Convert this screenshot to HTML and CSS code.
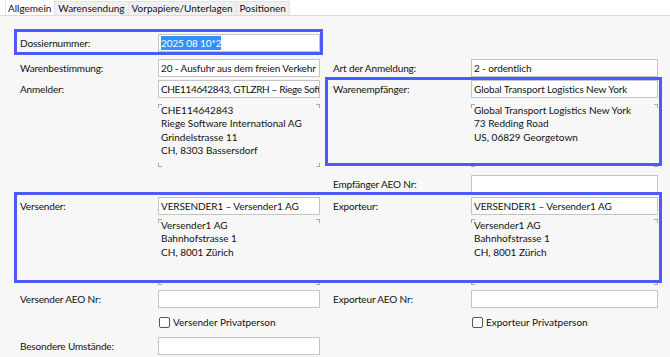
FILE: index.html
```html
<!DOCTYPE html>
<html lang="de">
<head>
<meta charset="utf-8">
<link rel="stylesheet" href="styles.css">
</head>
<body>
<div class="tabs">
  <div class="tab active">Allgemein</div>
  <div class="tab">Warensendung</div>
  <div class="tab">Vorpapiere/Unterlagen</div>
  <div class="tab">Positionen</div>
</div>
<div class="panel">
  <div class="form">
    <div class="lbl cl r1">Dossiernummer:</div>
    <div class="inp ci r1"><span class="sel">2025 08 10*2</span></div>

    <div class="lbl cl r2">Warenbestimmung:</div>
    <div class="inp ci r2">20 - Ausfuhr aus dem freien Verkehr</div>
    <div class="lbl cr r2">Art der Anmeldung:</div>
    <div class="inp cj r2">2 - ordentlich</div>

    <div class="lbl cl r3">Anmelder:</div>
    <div class="inp tight ci r3">CHE114642843, GTLZRH – Riege Soft</div>
    <div class="lbl cr r3">Warenempfänger:</div>
    <div class="inp cj r3">Global Transport Logistics New York</div>

    <div class="addr ci r4">CHE114642843<br>Riege Software International AG<br>Grindelstrasse 11<br>CH, 8303 Bassersdorf</div>
    <div class="addr cj r4">Global Transport Logistics New York<br>73 Redding Road<br>US, 06829 Georgetown</div>

    <div class="lbl cr r5">Empfänger AEO Nr:</div>
    <div class="inp cj r5"></div>

    <div class="lbl cl r6">Versender:</div>
    <div class="inp ci r6">VERSENDER1 – Versender1 AG</div>
    <div class="lbl cr r6">Exporteur:</div>
    <div class="inp cj r6">VERSENDER1 – Versender1 AG</div>

    <div class="addr addr-tall ci r7">Versender1 AG<br>Bahnhofstrasse 1<br>CH, 8001 Zürich</div>
    <div class="addr addr-tall cj r7">Versender1 AG<br>Bahnhofstrasse 1<br>CH, 8001 Zürich</div>

    <div class="lbl cl r8">Versender AEO Nr:</div>
    <div class="inp ci r8"></div>
    <div class="lbl cr r8">Exporteur AEO Nr:</div>
    <div class="inp cj r8"></div>

    <label class="chk ci r9"><span class="box"></span>Versender Privatperson</label>
    <label class="chk cj r9"><span class="box"></span>Exporteur Privatperson</label>

    <div class="lbl cl r10">Besondere Umstände:</div>
    <div class="inp ci r10"></div>

    <div class="hl hl-dossier"></div>
    <div class="hl hl-empf"></div>
    <div class="hl hl-vers"></div>
  </div>
</div>
</body>
</html>
```
FILE: styles.css
```css
html, body {
  margin: 0;
  padding: 0;
  background: #ffffff;
}
body {
  width: 670px;
  height: 357px;
  overflow: hidden;
  font-family: Lato, "Liberation Sans", sans-serif;
  font-size: 10px;
  color: #111111;
}
.tabs {
  display: flex;
  align-items: flex-end;
  height: 15px;
  padding-left: 5px;
  border-bottom: 1px solid #dadada;
  background: #ffffff;
}
.tab {
  height: 13px;
  line-height: 13px;
  padding: 0 3px;
  font-size: 10px;
  background: #f0f0f0;
  border: 1px solid #e3e3e3;
  border-bottom: none;
  border-left: none;
  color: #111111;
}
.tab.active {
  height: 15px;
  line-height: 16px;
  background: #ffffff;
  border-left: 1px solid #e3e3e3;
  padding: 0 3px 0 2px;
}
.panel {
  background: #f7f7f7;
  height: 341px;
}
.form {
  display: grid;
  grid-template-columns: 20px 138px 162px 13px 138px 187px 1fr;
  grid-template-rows: 25px 21px 24px 71px 22px 22px 71px 25px 22px 20px;
  padding-top: 18px;
}
.r1 { grid-row: 1; }
.r2 { grid-row: 2; }
.r3 { grid-row: 3; }
.r4 { grid-row: 4; }
.r5 { grid-row: 5; }
.r6 { grid-row: 6; }
.r7 { grid-row: 7; }
.r8 { grid-row: 8; }
.r9 { grid-row: 9; }
.r10 { grid-row: 10; }
.cl { grid-column: 2; }
.ci { grid-column: 3; }
.cr { grid-column: 5; }
.cj { grid-column: 6; }
.lbl {
  align-self: start;
  line-height: 18px;
  white-space: nowrap;
  letter-spacing: -0.15px;
}
.inp {
  align-self: start;
  box-sizing: border-box;
  height: 18px;
  line-height: 16px;
  padding: 0 2px;
  background: #ffffff;
  border: 1px solid #c4c4c4;
  white-space: nowrap;
  overflow: hidden;
  letter-spacing: -0.1px;
}
.inp.tight {
  letter-spacing: -0.35px;
}
.sel {
  background: #3390ff;
  color: #ffffff;
  padding: 1px 0;
}
.addr {
  align-self: start;
  box-sizing: border-box;
  height: 63px;
  padding: 0 3px;
  line-height: 13.3px;
  --c: #a9a9a9;
  background:
    linear-gradient(var(--c), var(--c)) left top / 1px 4px no-repeat,
    linear-gradient(var(--c), var(--c)) left top / 4px 1px no-repeat,
    linear-gradient(var(--c), var(--c)) right top / 1px 4px no-repeat,
    linear-gradient(var(--c), var(--c)) right top / 4px 1px no-repeat,
    linear-gradient(var(--c), var(--c)) left bottom / 1px 4px no-repeat,
    linear-gradient(var(--c), var(--c)) left bottom / 4px 1px no-repeat,
    linear-gradient(var(--c), var(--c)) right bottom / 1px 4px no-repeat,
    linear-gradient(var(--c), var(--c)) right bottom / 4px 1px no-repeat;
}
.addr-tall {
  height: 66px;
}
.chk {
  align-self: start;
  display: flex;
  align-items: center;
  gap: 3px;
  height: 14px;
  line-height: 14px;
  padding-left: 1px;
  white-space: nowrap;
}
.box {
  box-sizing: border-box;
  width: 11px;
  height: 11px;
  border: 1px solid #555555;
  border-radius: 2px;
  background: #ffffff;
}
.hl {
  align-self: start;
  box-sizing: border-box;
  border: 3px solid #4a5cf7;
  pointer-events: none;
}
.hl-dossier {
  grid-column: 1 / 4;
  grid-row: 1;
  margin: -5px -3px 0 14px;
  height: 26px;
}
.hl-empf {
  grid-column: 4 / 7;
  grid-row: 3 / 5;
  margin: -3px -4px 0 5px;
  height: 89px;
}
.hl-vers {
  grid-column: 1 / 7;
  grid-row: 6 / 8;
  margin: -5px -4px 0 14px;
  height: 91px;
}
```
